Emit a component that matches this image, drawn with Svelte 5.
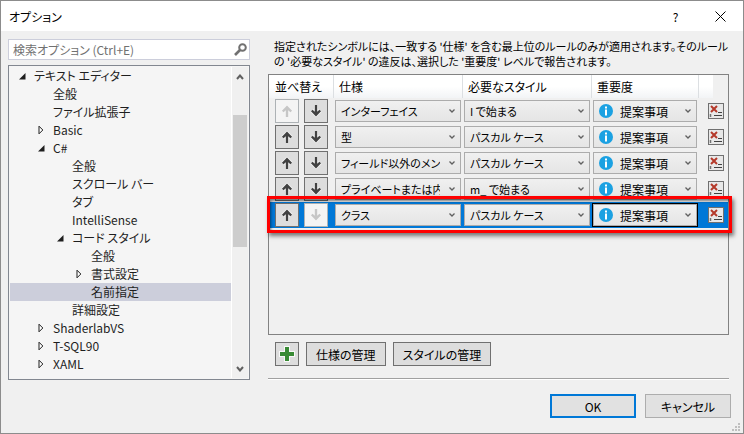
<script lang="ts">
  type TreeNode = { label: string; level: number; state?: 'open' | 'closed'; selected?: boolean };
  type Rule = { spec: string; style: string };

  const nodes: TreeNode[] = [
    { label: 'テキスト エディター', level: 0, state: 'open' },
    { label: '全般', level: 1 },
    { label: 'ファイル拡張子', level: 1 },
    { label: 'Basic', level: 1, state: 'closed' },
    { label: 'C#', level: 1, state: 'open' },
    { label: '全般', level: 2 },
    { label: 'スクロール バー', level: 2 },
    { label: 'タブ', level: 2 },
    { label: 'IntelliSense', level: 2 },
    { label: 'コード スタイル', level: 2, state: 'open' },
    { label: '全般', level: 3 },
    { label: '書式設定', level: 3, state: 'closed' },
    { label: '名前指定', level: 3, selected: true },
    { label: '詳細設定', level: 2 },
    { label: 'ShaderlabVS', level: 1, state: 'closed' },
    { label: 'T-SQL90', level: 1, state: 'closed' },
    { label: 'XAML', level: 1, state: 'closed' },
    { label: 'XML', level: 1, state: 'closed' },
  ];

  const rules: Rule[] = [
    { spec: 'インターフェイス', style: 'I で始まる' },
    { spec: '型', style: 'パスカル ケース' },
    { spec: 'フィールド以外のメンバー', style: 'パスカル ケース' },
    { spec: 'プライベートまたは内部フィールド', style: 'm_ で始まる' },
    { spec: 'クラス', style: 'パスカル ケース' },
  ];

  let selectedRow = $state(4);
</script>

{#snippet arrow(dir: 'up' | 'down')}
  <svg class="arrow {dir}" viewBox="0 0 12 12" width="12" height="12" aria-hidden="true">
    <path class="halo" d="M6 12V2M1.800 6.500 6 2.300l4.200 4.200" />
    <path d="M6 12V2M1.800 6.500 6 2.300l4.200 4.200" />
  </svg>
{/snippet}

{#snippet combo(value: string, label: string, info = false)}
  <div class="combo" class:info>
    <select aria-label={label}>
      <option>{value}</option>
    </select>
    {#if info}
      <svg class="info-icon" viewBox="0 0 14 14" width="14" height="14" aria-hidden="true">
        <circle cx="7" cy="7" r="7" fill="#1ba1e2" />
        <path d="M6 2.500h2v2H6zM6 5.500h2v6H6z" fill="#fff" />
      </svg>
    {/if}
    <svg class="chevron" viewBox="0 0 6 4" width="6" height="4" aria-hidden="true">
      <path d="M.5.5 3 3 5.500.5" />
    </svg>
  </div>
{/snippet}

<div class="dialog">
  <header>
    <h1>オプション</h1>
    <button class="caption" aria-label="ヘルプ">?</button>
    <button class="caption" aria-label="閉じる">
      <svg viewBox="0 0 11 11" width="11" height="11" aria-hidden="true">
        <path d="M.5.5l10 10M10.500.5l-10 10" stroke="#000" fill="none" />
      </svg>
    </button>
  </header>

  <main>
    <div class="side">
      <div class="search">
        <input type="text" placeholder="検索オプション (Ctrl+E)" aria-label="検索オプション" />
        <svg viewBox="0 0 13 13" width="13" height="13" aria-hidden="true">
          <circle cx="8.500" cy="4.500" r="3.300" fill="none" stroke="#717171" stroke-width="2" />
          <path d="M6 7 1 12" stroke="#717171" stroke-width="2.600" />
        </svg>
      </div>

      <div class="tree">
        <ul role="tree" aria-label="カテゴリ">
          {#each nodes as node}
            <li
              role="treeitem"
              aria-selected={!!node.selected}
              class:selected={node.selected}
              style="--level: {node.level}"
            >
              <span class="toggle">
                {#if node.state === 'open'}
                  <svg viewBox="0 0 7 7" width="7" height="7"><path d="M6.500 0v6.500H0z" fill="#1e1e1e" /></svg>
                {:else if node.state === 'closed'}
                  <svg viewBox="0 0 6 10" width="6" height="10">
                    <path d="M1 1.200v7.600L4.800 5z" fill="#fff" stroke="#1e1e1e" />
                  </svg>
                {/if}
              </span>
              {node.label}
            </li>
          {/each}
        </ul>
        <div class="scrollbar" aria-hidden="true">
          <svg viewBox="0 0 8 6" width="8" height="6"><path d="M1 5l3-3.500L7 5" /></svg>
          <div class="track"><div class="thumb"></div></div>
          <svg viewBox="0 0 8 6" width="8" height="6"><path d="M1 1l3 3.500L7 1" /></svg>
        </div>
      </div>
    </div>

    <div class="page">
      <p>
        指定されたシンボルには、一致する '仕様' を含む最上位のルールのみが適用されます。そのルール<br />
        の '必要なスタイル' の違反は、選択した '重要度' レベルで報告されます。
      </p>

      <div class="grid">
        <table>
          <thead>
            <tr>
              <th class="c-order">並べ替え</th>
              <th class="c-spec">仕様</th>
              <th class="c-spec">必要なスタイル</th>
              <th class="c-level">重要度</th>
              <th aria-label="削除"></th>
            </tr>
          </thead>
          <tbody>
            {#each rules as rule, i}
              <tr class:selected={i === selectedRow} onclick={() => (selectedRow = i)}>
                <td>
                  <div class="order">
                    <button class="square" disabled={i === 0} aria-label="上へ">{@render arrow('up')}</button>
                    <button class="square" disabled={i === rules.length - 1} aria-label="下へ">
                      {@render arrow('down')}
                    </button>
                  </div>
                </td>
                <td>{@render combo(rule.spec, '仕様')}</td>
                <td>{@render combo(rule.style, '必要なスタイル')}</td>
                <td>{@render combo('提案事項', '重要度', true)}</td>
                <td>
                  <button class="remove" aria-label="削除">
                    <svg viewBox="0 0 14 14" width="14" height="14" aria-hidden="true">
                      <path d="M2 2l6 6M8 2 2 8" stroke="#b5392a" stroke-width="2" />
                      <path d="M9 8.500h4M5 11.500h8" stroke="#424242" />
                      <path d="M1.500 10v3" stroke="#717171" stroke-width="1.500" />
                    </svg>
                  </button>
                </td>
              </tr>
            {/each}
          </tbody>
        </table>
      </div>

      <div class="manage">
        <button class="square" aria-label="追加">
          <svg viewBox="0 0 16 16" width="16" height="16" aria-hidden="true">
            <path d="M5 0h6v5h5v6h-5v5H5v-5H0V5h5z" fill="#f8f8f8" />
            <path d="M6 1h4v5h5v4h-5v5H6v-5H1V6h5z" fill="#388a34" />
          </svg>
        </button>
        <button>仕様の管理</button>
        <button>スタイルの管理</button>
      </div>
    </div>
  </main>

  <footer>
    <button class="ok">OK</button>
    <button>キャンセル</button>
    <svg class="grip" viewBox="0 0 8 8" width="8" height="8" aria-hidden="true">
      <path d="M6 0h2v2H6zM3 3h2v2H3zM6 3h2v2H6zM0 6h2v2H0zM3 6h2v2H3zM6 6h2v2H6z" fill="#bfbfbf" />
    </svg>
  </footer>
</div>

<style>
  :global(body) {
    margin: 0;
  }
  .dialog {
    display: flex;
    flex-direction: column;
    box-sizing: border-box;
    min-height: 100vh;
    border: 1px solid #8c8c8c;
    background: #f0f0f0;
    color: #000;
    font-family: 'Noto Sans CJK JP', sans-serif;
    font-size: 12px;
    line-height: 15px;
    font-feature-settings: 'palt';
  }
  button,
  input,
  select {
    box-sizing: border-box;
    margin: 0;
    font: inherit;
    font-feature-settings: inherit;
    color: inherit;
  }
  button {
    padding: 0;
    border: 1px solid #707070;
    background: #ddd;
  }
  svg {
    flex: none;
    display: block;
  }

  header {
    display: flex;
    align-items: center;
    height: 30px;
    padding-left: 8px;
    background: #fff;
  }
  h1 {
    flex: 1;
    margin: 0;
    font-size: 12px;
    font-weight: 400;
  }
  .caption {
    display: flex;
    align-items: center;
    justify-content: center;
    width: 45px;
    height: 30px;
    border: 0;
    background: none;
  }

  main {
    flex: 1;
    display: flex;
    gap: 18px;
    padding: 8px 14px 0 7px;
  }
  .side {
    flex: none;
    display: flex;
    flex-direction: column;
    gap: 5px;
    width: 242px;
  }
  .search {
    display: flex;
    align-items: center;
    box-sizing: border-box;
    height: 21px;
    padding: 0 2px 0 4px;
    border: 1px solid #cccedb;
    background: #fff;
  }
  .search input {
    flex: 1;
    min-width: 0;
    height: 19px;
    padding: 0;
    border: 0;
    outline: 0;
    background: none;
  }
  .search input::placeholder {
    color: #717171;
  }

  .tree {
    flex: 1 1 0;
    min-height: 0;
    display: flex;
    box-sizing: border-box;
    padding: 1px;
    border: 1px solid #828790;
    background: #f5f5f5;
  }
  ul {
    flex: 1;
    height: 100%;
    margin: 0;
    padding: 0;
    overflow: hidden;
    list-style: none;
    color: #1e1e1e;
  }
  li {
    display: flex;
    align-items: center;
    box-sizing: border-box;
    height: 18px;
    padding-bottom: 2px;
    padding-left: calc(6px + var(--level) * 19px);
    white-space: nowrap;
  }
  li.selected {
    background: #cccedb;
  }
  .toggle {
    display: flex;
    justify-content: center;
    width: 12px;
    padding-top: 2px;
    margin-right: 6px;
  }
  .scrollbar {
    display: flex;
    flex-direction: column;
    align-items: center;
    gap: 6px;
    box-sizing: border-box;
    width: 17px;
    padding: 7px 1px 6px;
    background: #f0f0f0;
    border-left: 1px solid #fff;
  }
  .scrollbar path {
    fill: none;
    stroke: #606060;
    stroke-width: 2;
  }
  .track {
    flex: 1;
    align-self: stretch;
  }
  .thumb {
    height: 48%;
    margin-top: 29px;
    background: #cdcdcd;
  }

  .page {
    flex: 1;
    min-width: 0;
    display: flex;
    flex-direction: column;
    margin-bottom: 1px;
    border-bottom: 1px solid #a0a0a0;
    box-shadow: 0 1px #fff;
  }
  p {
    margin: 0;
    padding: 0 0 5px 6px;
    font-size: 11px;
    white-space: nowrap;
  }
  .grid {
    flex: 1;
    border: 1px solid #828282;
  }
  table {
    width: 100%;
    table-layout: fixed;
    border-collapse: separate;
    border-spacing: 0;
  }
  thead {
    background: linear-gradient(#fff 50%, #f2f4f6);
  }
  th {
    box-sizing: border-box;
    height: 23px;
    padding: 0 0 0 6px;
    font-weight: 400;
    text-align: left;
    white-space: nowrap;
  }
  th + th {
    padding-left: 5px;
    border-left: 1px solid #dcdfe2;
  }
  .c-order {
    width: 64px;
  }
  .c-spec {
    width: 129px;
  }
  .c-level {
    width: 107px;
  }
  td {
    height: 26px;
    padding: 0 1px 0 2px;
  }
  td:first-child {
    padding-left: 6px;
  }
  td:last-child {
    padding-left: 10px;
  }
  tr.selected {
    position: relative;
    background: #0078d7;
  }
  /* callout round the row being edited */
  tr.selected::after {
    content: '';
    position: absolute;
    inset: -6px -4px -5px -2px;
    border: 3px solid #f00;
    box-shadow:
      2px 3px 4px rgba(0, 0, 0, 0.5),
      inset 1px 2px 3px rgba(0, 0, 0, 0.5);
    pointer-events: none;
  }
  tr.selected .info {
    outline: 1px solid #000;
  }

  .order {
    display: flex;
    gap: 5px;
  }
  .square {
    display: flex;
    align-items: center;
    justify-content: center;
    width: 24px;
    height: 24px;
  }
  .square:disabled {
    border-color: #adb2b5;
    background: #f4f4f4;
  }
  .arrow {
    overflow: visible;
  }
  .arrow path {
    fill: none;
    stroke: #424242;
    stroke-width: 2.4;
  }
  .arrow .halo {
    stroke: #f6f6f6;
    stroke-width: 4;
  }
  .arrow.down {
    transform: rotate(180deg);
  }
  .square:disabled path:not(.halo) {
    stroke: #c6c6c6;
  }

  .combo {
    display: grid;
    align-items: center;
  }
  .combo > * {
    grid-area: 1 / 1;
  }
  select {
    width: 100%;
    height: 22px;
    padding: 0 20px 0 5px;
    border: 1px solid #acacac;
    border-radius: 0;
    background: linear-gradient(#f0f0f0, #e5e5e5);
    font-size: 11px;
    appearance: none;
  }
  .info select {
    padding-left: 26px;
    font-size: 12px;
  }
  .info-icon {
    margin-left: 6px;
    pointer-events: none;
  }
  .chevron {
    justify-self: end;
    margin-right: 6px;
    pointer-events: none;
  }
  .chevron path {
    fill: none;
    stroke: #606060;
    stroke-width: 1.3;
  }
  .remove {
    display: block;
    width: 16px;
    height: 16px;
    background: #e8e8e8;
  }

  .manage {
    display: flex;
    gap: 7px;
    padding: 7px 7px 12px;
  }
  .manage button:not(.square) {
    padding: 0 9px;
  }

  footer {
    display: flex;
    gap: 9px;
    justify-content: flex-end;
    padding: 14px 3px 2px;
  }
  footer button {
    width: 86px;
    height: 24px;
    margin-bottom: 13px;
    border-color: #adadad;
    background: #e1e1e1;
  }
  .ok {
    border: 2px solid #0078d7;
  }
  .grip {
    align-self: flex-end;
    margin-left: -8px;
  }
</style>
